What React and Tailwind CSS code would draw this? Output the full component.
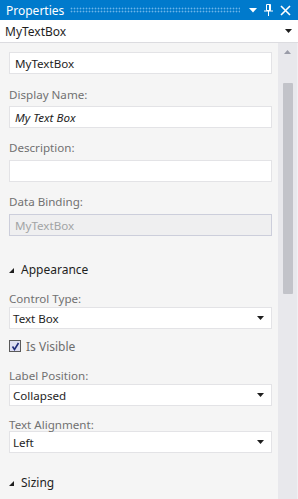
import React from "react";

const font = { fontFamily: '"Noto Sans", "Open Sans", sans-serif' };

const Arrow = ({ className = "" }) => (
  <svg width="7" height="4" viewBox="0 0 7 4" className={className}>
    <polygon points="0,0 7,0 3.5,4" fill="#1e1e1e" />
  </svg>
);

const Label = ({ children, className = "" }) => (
  <div className={`h-[16px] pt-[2px] leading-[16px] text-[11.6px] text-[#717171] ${className}`}>
    {children}
  </div>
);

const TextBox = ({ value, italic, disabled }) => (
  <div
    className={`h-[22px] flex items-center pt-[2px] px-[5px] text-[11.6px] border ${
      disabled
        ? "bg-[#efeff0] border-[#cccedb] text-[#a2a4a5]"
        : "bg-white border-[#e3e3e6] text-[#1e1e1e]"
    } ${italic ? "italic" : ""}`}
  >
    {value}
  </div>
);

const Select = ({ value }) => (
  <div className="h-[22px] flex items-center justify-between pl-[3px] pr-[7px] text-[11.6px] bg-white border border-[#e3e3e6] text-[#1e1e1e]">
    <span className="pt-[2px]">{value}</span>
    <Arrow />
  </div>
);

const Section = ({ title, className = "" }) => (
  <div className={`h-[16px] flex items-center gap-[7px] text-[12px] text-[#1e1e1e] ${className}`}>
    <svg width="5" height="5" viewBox="0 0 5 5" className="mt-[3px]">
      <polygon points="5,0 5,5 0,5" fill="#1e1e1e" />
    </svg>
    <span className="pt-[2px]">{title}</span>
  </div>
);

export default function App() {
  return (
    <div className="w-[298px] h-[499px] flex flex-col overflow-hidden bg-[#f5f5f5]" style={font}>
      {/* title bar */}
      <div className="h-[20px] bg-[#007acc] flex items-center pl-[6px] pr-[7px] text-white">
        <span className="text-[12px] leading-none pt-[1px]">Properties</span>
        <div className="flex-1 ml-[6px] mr-[9px] h-[6px] bg-[radial-gradient(circle,#6db5e8_0.8px,transparent_1.1px)] bg-size-[3px_3px]" />
        <div className="flex items-center gap-[7px]">
          <svg width="8" height="5" viewBox="0 0 8 5">
            <polygon points="0,0 8,0 4,4.5" fill="white" />
          </svg>
          <svg width="9" height="12" viewBox="0 0 9 12">
            <path d="M2.5 0.5h4v6h-4z" fill="none" stroke="white" />
            <path d="M5 0.5h1.5v6H5z" fill="white" />
            <path d="M0 7h9" stroke="white" />
            <path d="M4.5 7v5" stroke="white" />
          </svg>
          <svg width="11" height="11" viewBox="0 0 11 11">
            <path d="M1 1l9 9M10 1l-9 9" stroke="white" strokeWidth="1.6" />
          </svg>
        </div>
      </div>

      {/* object selector */}
      <div className="h-[23px] bg-white border-b border-[#dcdce0] flex items-center justify-between pl-[5px] pr-[6px] text-[12px] text-[#1e1e1e]">
        <span className="pt-[2px]">MyTextBox</span>
        <Arrow />
      </div>

      <div className="flex flex-1 min-h-0">
        {/* property grid */}
        <div className="flex-1 pt-[9px] pl-[9px] pr-[6px]">
          <TextBox value="MyTextBox" />

          <Label className="mt-[11px] mb-[5px]">Display Name:</Label>
          <TextBox value="My Text Box" italic />

          <Label className="mt-[10px] mb-[6px]">Description:</Label>
          <TextBox value="" />

          <Label className="mt-[10px] mb-[6px]">Data Binding:</Label>
          <TextBox value="MyTextBox" disabled />

          <Section title="Appearance" className="mt-[25px]" />

          <Label className="mt-[12px] mb-[2px]">Control Type:</Label>
          <Select value="Text Box" />

          <div className="mt-[9px] h-[16px] flex items-center gap-[5px]">
            <div className="w-[12px] h-[12px] border border-[#5a5a5a] bg-[#dedef2] flex items-center justify-center">
              <svg width="9" height="9" viewBox="0 0 9 9">
                <path d="M1.5 4.5l2 3 4-6.5" fill="none" stroke="#1f2a7a" strokeWidth="1.6" />
              </svg>
            </div>
            <span className="text-[12px] pt-[2px] text-[#6d6d6d]">Is Visible</span>
          </div>

          <Label className="mt-[12px] mb-[2px]">Label Position:</Label>
          <Select value="Collapsed" />

          <Label className="mt-[9px]">Text Alignment:</Label>
          <Select value="Left" />

          <Section title="Sizing" className="mt-[21px]" />
        </div>

        {/* scrollbar */}
        <div className="w-[20px] bg-[#e8e8ec] border-r border-[#f0f0f3] flex flex-col items-center pt-[7px]">
          <svg width="7" height="4" viewBox="0 0 7 4">
            <polygon points="3.5,0 7,4 0,4" fill="#9a9ca8" />
          </svg>
          <div className="mt-[29px] w-[10px] h-[211px] bg-[#c2c3c9] rounded-[1px]" />
        </div>
      </div>
    </div>
  );
}
